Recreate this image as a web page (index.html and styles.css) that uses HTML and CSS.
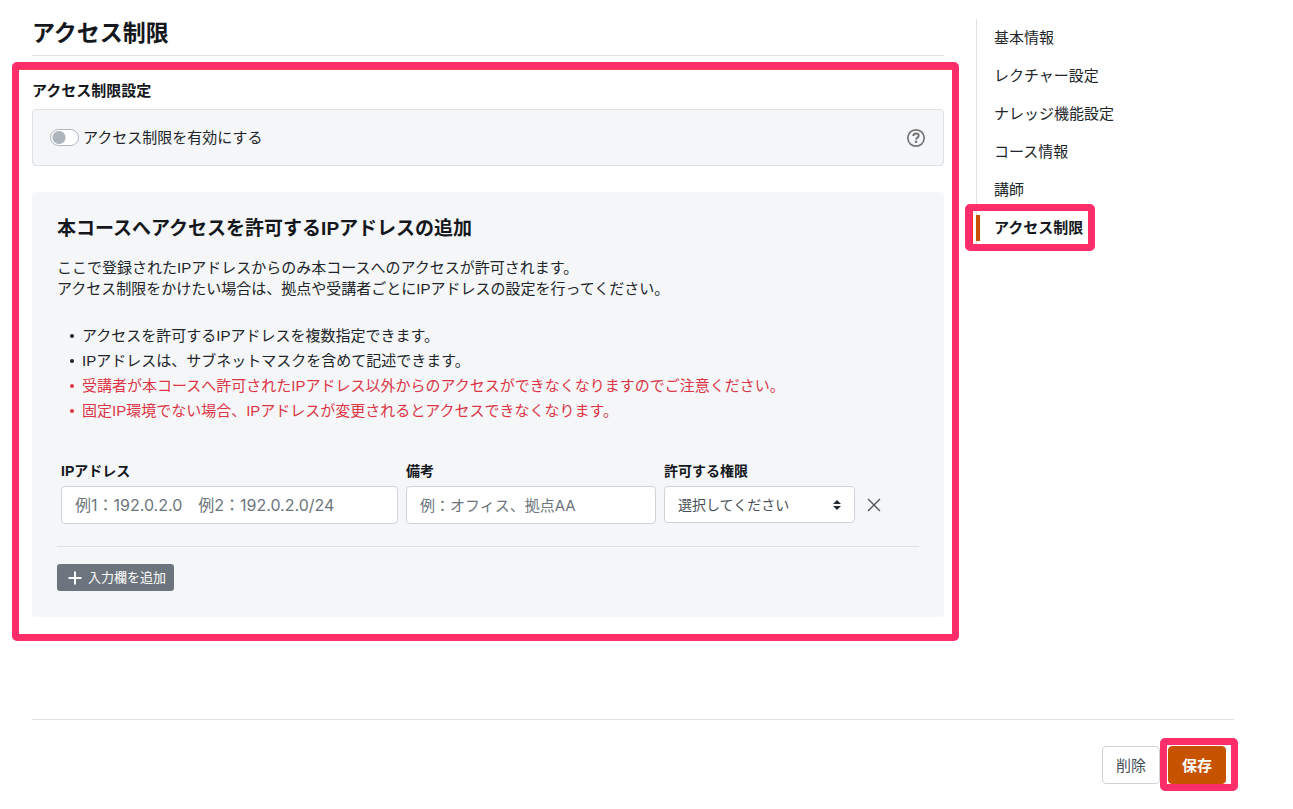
FILE: index.html
```html
<!DOCTYPE html>
<html lang="ja">
<head>
<meta charset="utf-8">
<meta name="viewport" content="width=device-width, initial-scale=1">
<title>アクセス制限</title>
<link rel="stylesheet" href="styles.css">
</head>
<body>
<div class="page">
  <div class="columns">
    <main class="main">
      <h1 class="page-title">アクセス制限</h1>
      <section class="settings">
        <h2 class="settings-label">アクセス制限設定</h2>
        <div class="toggle-box">
          <label class="toggle"><input class="switch" type="checkbox">アクセス制限を有効にする</label>
          <button class="icon-button" type="button" aria-label="ヘルプ">
            <svg width="20" height="20" viewBox="0 0 20 20" fill="none" stroke="#757575" stroke-width="1.7"><circle cx="10" cy="10" r="8.2"/><path d="M7.3 8.1C7.3 6.5 8.5 5.6 10 5.6s2.7.9 2.7 2.2c0 1.8-2.5 1.8-2.5 3.8" stroke-width="2"/><circle cx="10.1" cy="13.8" r="1.3" fill="#757575" stroke="none"/></svg>
          </button>
        </div>
        <div class="panel">
          <h3 class="panel-title">本コースへアクセスを許可するIPアドレスの追加</h3>
          <p class="lead">ここで登録されたIPアドレスからのみ本コースへのアクセスが許可されます。<br>アクセス制限をかけたい場合は、拠点や受講者ごとにIPアドレスの設定を行ってください。</p>
          <ul class="notes">
            <li>アクセスを許可するIPアドレスを複数指定できます。</li>
            <li>IPアドレスは、サブネットマスクを含めて記述できます。</li>
            <li class="warning">受講者が本コースへ許可されたIPアドレス以外からのアクセスができなくなりますのでご注意ください。</li>
            <li class="warning">固定IP環境でない場合、IPアドレスが変更されるとアクセスできなくなります。</li>
          </ul>
          <div class="fields">
            <div class="field">
              <label for="ip">IPアドレス</label>
              <input class="control control-ip" id="ip" type="text" placeholder="例1：192.0.2.0　例2：192.0.2.0/24">
            </div>
            <div class="field">
              <label for="memo">備考</label>
              <input class="control" id="memo" type="text" placeholder="例：オフィス、拠点AA">
            </div>
            <div class="field">
              <label for="role">許可する権限</label>
              <div class="select-wrap">
                <select class="control select" id="role"><option>選択してください</option></select>
                <svg class="select-arrows" width="8" height="10" viewBox="0 0 8 10" fill="#212b36"><path d="M0 4 4 0l4 4zM0 6l4 4 4-4z"/></svg>
              </div>
            </div>
            <button class="icon-button remove" type="button" aria-label="削除">
              <svg width="14" height="14" viewBox="0 0 14 14" fill="none" stroke="#50565c" stroke-width="1.4"><path d="M1 1l12 12M13 1 1 13"/></svg>
            </button>
          </div>
          <button class="add-button" type="button">
            <svg width="14" height="14" viewBox="0 0 14 14" fill="none" stroke="#fff" stroke-width="2"><path d="M7 .5v13M.5 7h13"/></svg>
            入力欄を追加
          </button>
        </div>
      </section>
    </main>
    <nav class="side-nav">
      <a href="#">基本情報</a>
      <a href="#">レクチャー設定</a>
      <a href="#">ナレッジ機能設定</a>
      <a href="#">コース情報</a>
      <a href="#">講師</a>
      <a class="active" href="#">アクセス制限</a>
    </nav>
  </div>
  <footer class="actions">
    <button class="button" type="button">削除</button>
    <div class="save-mark"><button class="button primary" type="button">保存</button></div>
  </footer>
</div>
</body>
</html>
```
FILE: styles.css
```css
* { box-sizing: border-box; }

body {
  margin: 0;
  background: #fff;
  color: #212529;
  font-family: "Liberation Sans", "Noto Sans CJK JP", sans-serif;
  font-size: 15px;
  line-height: 21px;
}

h1, h2, h3, p, ul { margin: 0; padding: 0; }

h1, h2, h3, .field label, .side-nav .active { color: #14181c; }

button, input, select { font: inherit; color: inherit; margin: 0; }

.page { padding: 0 59px 0 32px; }

.columns { display: flex; align-items: flex-start; gap: 32px; }

.main { flex: 1; min-width: 0; padding-top: 16px; }

.page-title {
  padding-bottom: 5px;
  border-bottom: 1px solid #dee2e6;
  font-size: 23px;
  line-height: 34px;
}

.settings { position: relative; padding: 24px 0; }

/* Highlight frames drawn over the content */
.settings::after,
.side-nav .active::after,
.save-mark::after {
  content: "";
  position: absolute;
  border: 7px solid #ff2d69;
  border-radius: 5px;
  pointer-events: none;
}

.settings::after {
  inset: 6px -15px 0 -20px;
  box-shadow: inset 0 1px #ff4a5a;
}

.settings-label { margin-bottom: 7px; font-size: 15px; line-height: 22px; }

.toggle-box {
  display: flex;
  align-items: center;
  justify-content: space-between;
  padding: 17px;
  border: 1px solid #dee2e6;
  border-radius: 4px;
  background: #f4f6f8;
}

.toggle { display: flex; align-items: center; gap: 4px; }

.switch {
  appearance: none;
  width: 29px;
  height: 17px;
  border: 1px solid #adb5bd;
  border-radius: 9px;
  background: #fff radial-gradient(circle at 8px 50%, #adb5bd 6px, transparent 7px);
}

.icon-button {
  display: flex;
  padding: 0;
  border: 0;
  background: none;
}

.panel {
  margin-top: 26px;
  padding: 25px 25px 26px;
  border-radius: 4px;
  background: #f4f6f8;
}

.panel-title { font-size: 19px; line-height: 24px; }

.lead { margin-top: 16px; }

.notes {
  display: grid;
  gap: 4px;
  margin-top: 26px;
  padding-left: 13px;
  list-style: none;
}

.notes li { display: flex; align-items: center; gap: 8px; }

.notes li::before {
  content: "";
  flex: none;
  width: 4px;
  height: 4px;
  border-radius: 50%;
  background: currentColor;
}

.warning { color: #dc3545; }

.fields {
  display: grid;
  grid-template-columns: 337fr 250fr 191fr 56px;
  gap: 8px;
  margin-top: 40px;
  padding: 0 0 22px 4px;
  border-bottom: 1px solid #dee2e6;
}

.field label {
  display: block;
  margin-bottom: 5px;
  font-size: 14px;
  line-height: 20px;
  font-weight: 700;
}

.control {
  display: block;
  width: 100%;
  height: 38px;
  padding: 0 13px;
  border: 1px solid #ced4da;
  border-radius: 4px;
  background: #fff;
  font-family: Inter, "Noto Sans CJK JP", sans-serif;
}

.control-ip { font-size: 16px; }

.control::placeholder { color: #6c757d; opacity: 1; }

.select-wrap { position: relative; }

.select {
  appearance: none;
  height: 37px;
  color: #495057;
  font-size: 14px;
}

.select-arrows {
  position: absolute;
  top: 50%;
  right: 14px;
  margin-top: -5px;
  pointer-events: none;
}

.remove { align-self: end; padding: 12px 4px; }

.add-button {
  display: flex;
  align-items: center;
  gap: 6px;
  margin-top: 17px;
  padding: 3px 8px 3px 11px;
  border: 0;
  border-radius: 3px;
  background: #6c757d;
  color: #fff;
  font-size: 13px;
}

.side-nav {
  width: 258px;
  margin-top: 19px;
  border-left: 1px solid #dee2e6;
}

.side-nav a {
  display: block;
  width: fit-content;
  padding: 0 0 0 17px;
  color: inherit;
  line-height: 38px;
  text-decoration: none;
}

.side-nav .active { position: relative; color: #14181c; font-weight: 700; }

.side-nav .active::before {
  content: "";
  position: absolute;
  inset: 6px auto 6px -1px;
  width: 4px;
  background: #c75300;
}

.side-nav .active::after {
  inset: -5px -12px -4px -12px;
  box-shadow: inset 1px 0 #ff2a2a;
}

.actions {
  display: flex;
  justify-content: flex-end;
  gap: 8px;
  margin-top: 78px;
  padding: 26px 8px 24px 0;
  border-top: 1px solid #dee2e6;
}

.button {
  height: 38px;
  padding: 0 13px;
  border: 1px solid #ced4da;
  border-radius: 4px;
  background: #fff;
  color: #495057;
}

.primary {
  border-color: #c75300;
  background: #c75300;
  color: #fff;
  font-weight: 700;
}

.save-mark { position: relative; }

.save-mark::after { inset: -8px -12px -7px -8px; }
```
